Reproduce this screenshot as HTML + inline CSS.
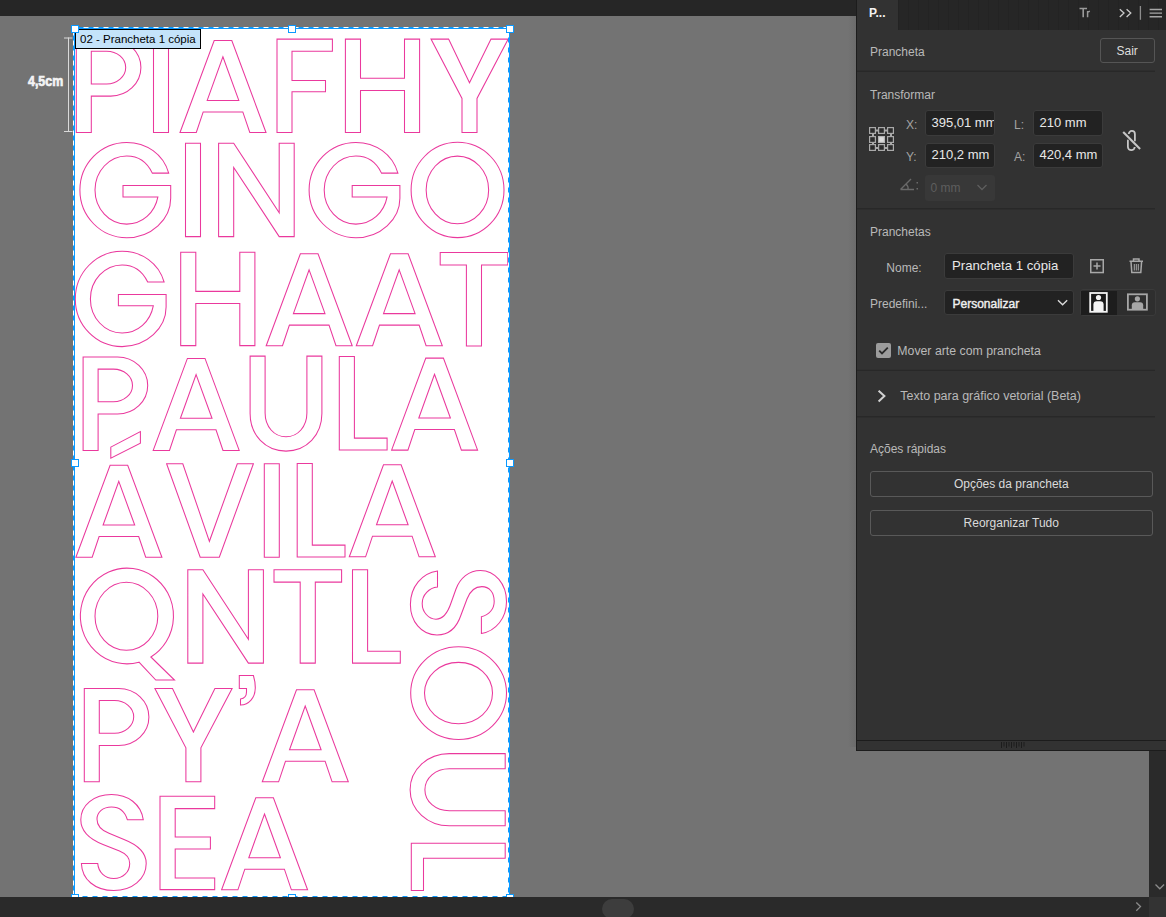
<!DOCTYPE html>
<html><head><meta charset="utf-8">
<style>
*{margin:0;padding:0;box-sizing:border-box}
html,body{width:1166px;height:917px;overflow:hidden;background:#737373;font-family:"Liberation Sans",sans-serif}
.abs{position:absolute}
#topbar{left:0;top:0;width:1166px;height:16px;background:#262626}
#botbar{left:0;top:897px;width:1166px;height:20px;background:#2a2a2a}
#thumb{left:602px;top:899px;width:32px;height:20px;border-radius:10px;background:#3d3d3d}
#vscroll{left:1149px;top:751px;width:17px;height:146px;background:#2a2a2a}
#corner{left:1149px;top:897px;width:17px;height:20px;background:#333}
#artboard{left:75px;top:29px;width:434px;height:868px;background:#fff}
svg{position:absolute;left:0;top:0}
#panel{left:856px;top:0;width:310px;height:751px;background:#323232;border-left:1px solid #1c1c1c;border-bottom:1px solid #1c1c1c}
.t{position:absolute;white-space:nowrap;font-size:12px;color:#b9b9b9;line-height:14px}
.sep{left:857px;width:298px;height:1px;background:#282828}
.lab{color:#a3a3a3}
.inp{position:absolute;background:#222222;border:1px solid #3b3b3b;border-radius:3px;overflow:hidden}
.inp span{position:absolute;top:5px;white-space:nowrap;font-size:13px;line-height:14px;color:#e8e8e8}
.btn{position:absolute;left:869.5px;width:283.5px;border:1px solid #595959;border-radius:3px;color:#dadada;font-size:12px;text-align:center;line-height:24px}
</style></head><body>
<div id="topbar" class="abs"></div>
<div id="artboard" class="abs"></div>
<svg width="1166" height="917" viewBox="0 0 1166 917">
<defs>
<path id="gP" d="M0,0 H34.4 C51.2,0 64.6,12.8 64.6,28.5 C64.6,44.2 51.2,57 34.4,57 H15 V93.4 H0 Z M15,12.1 H30.3 C40.8,12.1 49.4,19.4 49.4,28.4 C49.4,37.4 40.8,44.8 30.3,44.8 H15 Z"/>
<path id="gI" d="M0,0 H15 V93.4 H0 Z"/>
<path id="gA" d="M0,93.4 L34.2,1.4 H51.8 L86,93.4 H69.8 L62.8,72.8 H23.2 L16.3,93.4 Z M42.9,17.6 L58.8,61.3 H27.2 Z"/>
<path id="gF" d="M0,0 H55.4 V12.2 H15 V41.3 H48.5 V52.7 H15 V93.4 H0 Z"/>
<path id="gH" d="M0,0 H15.1 V39.2 H59.1 V0 H74.2 V93.4 H59.1 V51.3 H15.1 V93.4 H0 Z"/>
<path id="gY" d="M0,0 H17.6 L38.5,43.6 L60,0 H77.2 L46,59.4 V93.4 H31 V59.4 Z"/>
<path id="gN" d="M0,0 H15.1 L60.6,69.6 V0 H75.6 V93.4 H60.6 L15.1,24.2 V93.4 H0 Z"/>
<path id="gG" d="M88.8,29.9 C83.5,11 66.5,-0.8 46.8,-0.8 C20.9,-0.8 0,20.5 0,46.85 C0,73.2 20.9,94.5 46.8,94.5 C71.5,94.5 90.8,76 90.8,55 V42.3 H43.1 V53.7 H78 C75,69.5 62.5,80.9 46.8,80.9 C29.3,80.9 15.1,65.6 15.1,46.85 C15.1,28.1 29.3,12.8 46.8,12.8 C58.5,12.8 67.5,19.5 72.4,29.9 Z"/>
<path id="gO" d="M0,46.65 A46.45,47.65 0 1 0 92.9,46.65 A46.45,47.65 0 1 0 0,46.65 Z M15.05,46.65 A31.25,33.85 0 1 0 77.55,46.65 A31.25,33.85 0 1 0 15.05,46.65 Z"/>
<path id="gT" d="M0,0 H67.6 V12.4 H41.3 V93.4 H26.2 V12.4 H0 Z"/>
<path id="gU" d="M0,0 H15 V57 C15,70.5 24,80.7 35.9,80.7 C47.8,80.7 56.8,70.5 56.8,57 V0 H71.8 V57.5 C71.8,79 56.5,95 35.9,95 C15.3,95 0,79 0,57.5 Z"/>
<path id="gL" d="M0,0 H15.1 V81.6 H47.8 V93.4 H0 Z"/>
<path id="gV" d="M0,0 H16.2 L42.8,77.5 L70.7,0 H86.8 L52.7,93.4 H33.6 Z"/>
<path id="gE" d="M0,0 H54.7 V12.4 H15.2 V40.8 H50.4 V52.7 H15.2 V81.7 H54.7 V93.4 H0 Z"/>
</defs>
<g fill="none" stroke="#ea399d" stroke-width="1.05">
<!-- row 1 -->
<use href="#gP" x="76.3" y="39.1"/>
<use href="#gI" x="153.5" y="39.1"/>
<use href="#gA" x="180" y="39.1"/>
<use href="#gF" x="277" y="39.1"/>
<use href="#gH" x="345.4" y="39.1"/>
<use href="#gY" x="431" y="39.1"/>
<!-- row 2 -->
<use href="#gG" x="79.9" y="143.2"/>
<use href="#gI" x="185.5" y="143.2"/>
<use href="#gN" x="218.6" y="143.2"/>
<use href="#gG" x="309.1" y="143.2"/>
<use href="#gO" x="411.1" y="143.3"/>
<!-- row 3 -->
<use href="#gG" x="75.3" y="252.1"/>
<use href="#gH" x="180.7" y="252.2"/>
<use href="#gA" x="266.2" y="252.3"/>
<use href="#gA" x="356.3" y="252.3"/>
<use href="#gT" x="440.2" y="252.5"/>
<!-- row 4 -->
<use href="#gP" x="83.1" y="357"/>
<use href="#gA" x="153.2" y="357"/>
<use href="#gU" x="250.1" y="356.1"/>
<use href="#gL" x="339.3" y="356.5"/>
<use href="#gA" x="391.6" y="356.7"/>
<!-- row 5 -->
<use href="#gA" x="75.9" y="463.8"/>
<path d="M110.8,447.1 L140.4,431.5 V443.3 L110.8,458.1 Z"/>
<use href="#gV" x="166.6" y="463.8"/>
<use href="#gI" x="264.3" y="463.8"/>
<use href="#gL" x="297.2" y="463.5"/>
<use href="#gA" x="349.3" y="463.4"/>
<!-- row 6 -->
<path d="M150.9,657 L174.5,680 H155.8 L139,662.2 A46.55,47.85 0 1 1 150.9,657 Z"/>
<ellipse cx="126.4" cy="616.3" rx="31.4" ry="34"/>
<use href="#gN" x="187.8" y="569.7"/>
<use href="#gT" x="274" y="569.7"/>
<use href="#gL" x="352.5" y="569.7"/>
<path d="M437.5,571 V587.1 C429,588 422.2,595 422.2,603.4 C422.2,612 428.5,619.2 436,619.2 C444,619.2 448,612 451,603 L456,589 C460,578 469,570.4 480.4,570.4 C495,570.4 506.5,584 506.5,601.4 C506.5,618 496,631 481.4,633.5 V616.7 C489,615 494.2,609 494.2,601.4 C494.2,592 489,586.6 481.9,586.6 C475,586.6 470,591 467,599 L461,615 C457,627 449,635 437,635 C421,635 410.4,621 410.4,604.4 C410.4,587 422,573 437.5,571 Z"/>
<!-- row 7 -->
<use href="#gP" x="84.3" y="688.4"/>
<use href="#gY" x="154.9" y="688.4"/>
<path d="M239.3,675.5 H253.4 C254.8,680 255.4,684 255.3,688 C255.1,698 249,704.5 240.5,705.1 V699.1 C244,698.5 246.5,696 246.5,692 V688.5 H239.3 Z"/>
<use href="#gA" x="262.3" y="688.4"/>
<ellipse cx="458.6" cy="693.1" rx="47.9" ry="46.4"/>
<ellipse cx="458.5" cy="693.1" rx="34" ry="30.7"/>
<!-- row 8 -->
<path d="M143.3,819.8 H127.4 C125,811.5 119,806.9 111.5,806.9 C103,806.9 97,812 97,819.2 C97,826 102,830.5 109,833.3 L124,839.5 C138,845 146.2,852 146.2,863.4 C146.2,879 132,890.5 113.8,890.5 C95,890.5 82,879.5 81.4,863.4 H97.7 C98.5,872.5 105,878.5 113.8,878.5 C123,878.5 129.7,872 129.7,863.4 C129.7,857 125.5,853.5 119.5,851 L103,844.5 C89,839 80.8,831 80.8,819.8 C80.8,805 94,794.5 111.5,794.5 C128,794.5 141,804 143.3,819.8 Z"/>
<use href="#gE" x="160" y="796.2"/>
<use href="#gA" x="221.6" y="796.4"/>
<path d="M505.2,753.6 H449.3 C427.5,753.6 410.1,769.5 410.1,789.7 C410.1,810 427.5,825.8 449.3,825.8 H505.2 V810.7 H449.3 C435.5,810.7 424.9,801.5 424.9,789.7 C424.9,778 435.5,768.8 449.3,768.8 H505.2 Z"/>
<path d="M505.2,843.3 H411.3 V890.4 H423.5 V858.3 H505.2 Z"/>
</g>
</svg>
<div class="abs" style="left:75px;top:29px;width:126px;height:20px;background:#c4e3fa;border:1px solid #000"></div>
<div class="t" style="left:80px;top:32px;font-size:11.5px;color:#000">02 - Prancheta 1 cópia</div>
<div class="t" style="left:28px;top:72.5px;font-size:15.5px;line-height:16px;font-weight:bold;color:#f4f4f4;-webkit-text-stroke:0.7px #f4f4f4;transform:scaleX(0.8);transform-origin:0 0">4,5cm</div>
<svg width="1166" height="917" viewBox="0 0 1166 917">
<!-- artboard border -->
<rect x="74.5" y="28.5" width="435" height="870" fill="none" stroke="#0b99ff" stroke-width="1"/>
<rect x="73.5" y="27.5" width="435" height="869" fill="none" stroke="#0b99ff" stroke-width="1"/>
<rect x="73.5" y="27.5" width="435" height="869" fill="none" stroke="#ffffff" stroke-width="1" stroke-dasharray="5 5"/>

<!-- handles -->
<g fill="#fff" stroke="#0b99ff" stroke-width="1">
<rect x="71.5" y="25.5" width="7" height="7"/>
<rect x="288.5" y="25.5" width="7" height="7"/>
<rect x="506.5" y="25.5" width="7" height="7"/>
<rect x="71.5" y="459.5" width="7" height="7"/>
<rect x="506.5" y="459.5" width="7" height="7"/>
<rect x="71.5" y="894.5" width="7" height="7"/>
<rect x="288.5" y="894.5" width="7" height="7"/>
<rect x="506.5" y="894.5" width="7" height="7"/>
</g>
<!-- dimension marker -->
<g stroke="#d9d9d9" stroke-width="1" fill="none">
<path d="M68.5,37.5 V131.5 M64,38 H72.5 M64,131.5 H72.5"/>
</g>
</svg>

<div id="botbar" class="abs"></div>
<div id="vscroll" class="abs"></div>
<div id="corner" class="abs"></div>
<div id="thumb" class="abs"></div>
<svg class="abs" style="left:1130px;top:878px" width="36" height="39" viewBox="1130 878 36 39"><g fill="none" stroke="#8c8c8c" stroke-width="1.3"><path d="M1155.5,884.5 L1159.8,888.8 L1164.1,884.5"/><path d="M1136.3,902.5 L1140.5,906.6 L1136.3,910.7"/></g></svg>


<div class="abs" style="left:848px;top:16px;width:8px;height:731px;background:linear-gradient(90deg,rgba(0,0,0,0) 0,rgba(0,0,0,0.07) 100%)"></div>
<div id="panel" class="abs"></div>
<div class="abs" style="left:898px;top:0;width:268px;height:30px;background:#262626;background-image:repeating-linear-gradient(90deg,#232323 0,#232323 1px,#262626 1px,#262626 10px)"></div>
<div class="t" style="left:869px;top:6px;color:#f2f2f2;font-weight:bold;font-size:12px">P...</div>
<svg class="abs" style="left:1060px;top:0" width="106" height="30" viewBox="1060 0 106 30">
<g fill="none" stroke-linecap="butt">
<path d="M1079.5,8.5 H1087 M1083.2,8.5 V17.2" stroke="#9a9a9a" stroke-width="1.6"/>
<path d="M1087.6,11 V17.2 M1087.6,12.3 L1089.8,11.2" stroke="#9a9a9a" stroke-width="1.5"/>
<path d="M1119.8,9.2 L1124,13.1 L1119.8,17 M1126.6,9.2 L1130.8,13.1 L1126.6,17" stroke="#c9c9c9" stroke-width="1.3"/>
<path d="M1140.4,6 V19.8" stroke="#8c8c8c" stroke-width="1.3"/>
<path d="M1149.6,9.5 H1162 M1149.6,13.1 H1162 M1149.6,16.7 H1162" stroke="#a6a6a6" stroke-width="1.4"/>
</g></svg>
<svg class="abs" style="left:856px;top:60px" width="302" height="370" viewBox="856 60 302 370"><g stroke="#282828" stroke-width="1.4"><path d="M857,71.2 H1155 M857,208.8 H1155 M857,370.4 H1155 M857,416.8 H1155"/></g></svg>
<div class="t" style="left:870px;top:44.5px">Prancheta</div>
<div class="abs" style="left:1100px;top:38px;width:55px;height:25px;border:1px solid #555;border-radius:3px"></div>
<div class="t" style="left:1116.5px;top:44px;color:#dedede">Sair</div>
<div class="t" style="left:870px;top:88px">Transformar</div>
<svg class="abs" style="left:866px;top:124px" width="32" height="30" viewBox="866 124 32 30">
<g fill="#a9a9a9">
<rect x="876" y="129.5" width="2" height="2"/><rect x="885" y="129.5" width="2" height="2"/>
<rect x="876" y="147" width="2" height="2"/><rect x="885" y="147" width="2" height="2"/>
<rect x="872" y="134" width="2" height="2"/><rect x="872" y="142.8" width="2" height="1.4"/>
<rect x="890" y="134" width="2" height="2"/><rect x="890" y="142.8" width="2" height="1.4"/>
</g>
<g fill="#2b2b2b" stroke="#a9a9a9" stroke-width="1.2">
<rect x="869.6" y="127.6" width="5.8" height="5.8"/><rect x="878.6" y="127.6" width="5.8" height="5.8"/><rect x="887.6" y="127.6" width="5.8" height="5.8"/>
<rect x="869.6" y="136.6" width="5.8" height="5.8"/><rect x="887.6" y="136.6" width="5.8" height="5.8"/>
<rect x="869.6" y="144.6" width="5.8" height="5.8"/><rect x="878.6" y="144.6" width="5.8" height="5.8"/><rect x="887.6" y="144.6" width="5.8" height="5.8"/>
</g>
<rect x="878.6" y="136.6" width="5.8" height="5.8" fill="#dcdcdc" stroke="#b4b4b4" stroke-width="1.2"/>
</svg>
<div class="t lab" style="left:906px;top:117.5px">X:</div>
<div class="t lab" style="left:906px;top:149.5px">Y:</div>
<div class="t lab" style="left:1014px;top:117.8px">L:</div>
<div class="t lab" style="left:1014px;top:149.8px">A:</div>
<div class="inp" style="left:925px;top:110px;width:70px;height:26px"><span style="left:5.5px">395,01 mm</span></div>
<div class="inp" style="left:1033px;top:110px;width:70px;height:26px"><span style="left:5.5px">210 mm</span></div>
<div class="inp" style="left:925px;top:142.5px;width:70px;height:25px"><span style="left:5.5px;top:4.2px">210,2 mm</span></div>
<div class="inp" style="left:1033px;top:142.5px;width:70px;height:25px"><span style="left:5.5px;top:4px">420,4 mm</span></div>
<svg class="abs" style="left:1118px;top:126px" width="28" height="28" viewBox="1118 126 28 28">
<g fill="none" stroke="#c6c6c6" stroke-width="1.8" stroke-linecap="round">
<path d="M1128.8,133.6 V134 A3.05,3.05 0 0 1 1134.9,134 V140.6"/>
<path d="M1127.9,140.4 V147.1 A3.4,3.1 0 0 0 1134.7,147.1 V147.6"/>
<path d="M1123.2,132.1 L1140.1,148.9" stroke-width="2.1" stroke-linecap="butt"/>
</g></svg>
<svg class="abs" style="left:898px;top:176px" width="24" height="18" viewBox="898 176 24 18">
<g fill="none" stroke="#6a6a6a" stroke-width="1.4">
<path d="M900.5,189.5 H914 M900.5,189.5 L911,179"/>
<path d="M906,184 A6,6 0 0 1 908,189.5"/>
</g>
<rect x="916.5" y="182" width="1.5" height="1.5" fill="#6a6a6a"/><rect x="916.5" y="188" width="1.5" height="1.5" fill="#6a6a6a"/>
</svg>
<div class="abs" style="left:924.5px;top:174.5px;width:70.5px;height:26px;background:#383838;border-radius:3px"></div>
<div class="t" style="left:930.5px;top:180.5px;color:#5e5e5e">0 mm</div>
<svg class="abs" style="left:975px;top:182px" width="14" height="10" viewBox="975 182 14 10"><path d="M977.5,185 L982,189.5 L986.5,185" fill="none" stroke="#5e5e5e" stroke-width="1.3"/></svg>
<div class="t" style="left:870px;top:224.5px">Pranchetas</div>
<div class="t" style="left:886.3px;top:260.5px">Nome:</div>
<div class="inp" style="left:944px;top:253px;width:130px;height:25.5px"><span style="left:7px;top:4px;font-size:13.2px;line-height:16px">Prancheta 1 cópia</span></div>
<svg class="abs" style="left:1086px;top:254px" width="62" height="22" viewBox="1086 254 62 22">
<g fill="none" stroke="#a8a8a8" stroke-width="1.5">
<rect x="1090.75" y="259.75" width="12.5" height="12.8"/>
<path d="M1097,262.5 V269.5 M1093.5,266 H1100.5"/>
<path d="M1129.5,261.3 H1143 M1133.5,261 V259 H1139 V261"/>
<path d="M1131,261.5 L1131.8,272.5 H1140.8 L1141.6,261.5"/>
<path d="M1134.3,264 V270.5 M1136.3,264 V270.5 M1138.3,264 V270.5" stroke-width="1"/>
</g></svg>
<div class="t" style="left:870px;top:296.5px">Predefini...</div>
<div class="inp" style="left:944px;top:289.5px;width:130px;height:25.5px"><span style="left:7.5px;top:6.3px;color:#f0f0f0;font-size:12px;line-height:14px;-webkit-text-stroke:0.4px #f0f0f0">Personalizar</span></div>
<svg class="abs" style="left:1055px;top:297px" width="14" height="10" viewBox="1055 297 14 10"><path d="M1058,300.3 L1062.6,304.8 L1067.2,300.3" fill="none" stroke="#dadada" stroke-width="1.4"/></svg>
<div class="abs" style="left:1079.5px;top:289px;width:76.5px;height:26.5px;border:1px solid #3a3a3a;border-radius:3px;background:#2e2e2e"></div>
<div class="abs" style="left:1081px;top:290.5px;width:36px;height:24px;background:#1d1d1d"></div>
<svg class="abs" style="left:1082px;top:290px" width="72" height="25" viewBox="1082 290 72 25">
<rect x="1090.2" y="293" width="16.6" height="18.8" fill="#1a1a1a" stroke="#f4f4f4" stroke-width="1.8"/>
<circle cx="1098.5" cy="297.5" r="2.6" fill="#f4f4f4"/>
<path d="M1093.4,310.9 V304.6 Q1093.4,301.2 1096.8,301.2 H1100.2 Q1103.6,301.2 1103.6,304.6 V310.9 Z" fill="#f4f4f4"/>
<rect x="1127.9" y="294.3" width="19" height="15.4" fill="none" stroke="#a6a6a6" stroke-width="1.8"/>
<circle cx="1137.4" cy="298.8" r="2.6" fill="#a6a6a6"/>
<path d="M1131.8,309 V305.3 Q1131.8,302.3 1134.8,302.3 H1140.2 Q1143.2,302.3 1143.2,305.3 V309 Z" fill="#a6a6a6"/>
</svg>
<div class="abs" style="left:876px;top:343px;width:15px;height:15px;border-radius:2px;background:#9c9c9c"></div>
<svg class="abs" style="left:876px;top:343px" width="15" height="15" viewBox="0 0 15 15"><path d="M3.2,7.6 L6,10.4 L11.8,4.6" fill="none" stroke="#2a2a2a" stroke-width="1.8"/></svg>
<div class="t" style="left:897.3px;top:343.5px;font-size:12.3px">Mover arte com prancheta</div>
<svg class="abs" style="left:875px;top:388px" width="14" height="16" viewBox="875 388 14 16"><path d="M878.6,390.8 L884.4,396.1 L878.6,401.4" fill="none" stroke="#d2d2d2" stroke-width="2"/></svg>
<div class="t" style="left:900.3px;top:389px;font-size:12.5px">Texto para gráfico vetorial (Beta)</div>
<div class="t" style="left:870px;top:442px">Ações rápidas</div>
<div class="btn" style="top:470.5px;height:26.5px">Opções da prancheta</div>
<div class="btn" style="top:509.5px;height:26px">Reorganizar Tudo</div>
<div class="abs" style="left:857px;top:739.5px;width:309px;height:2px;background:#1c1c1c"></div>
<div class="abs" style="left:857px;top:741px;width:309px;height:9px;background:#323232"></div>
<svg class="abs" style="left:1000px;top:741px" width="27" height="9" viewBox="1000 741 27 9"><g stroke="#1c1c1c" stroke-width="1"><path d="M1001.5,742 V748 M1006.5,742 V748 M1011.5,742 V748 M1016.5,742 V748 M1021.5,742 V748"/><path d="M1004,742 V746.5 M1009,742 V746.5 M1014,742 V746.5 M1019,742 V746.5 M1024,742 V746.5"/></g></svg>

</body></html>
